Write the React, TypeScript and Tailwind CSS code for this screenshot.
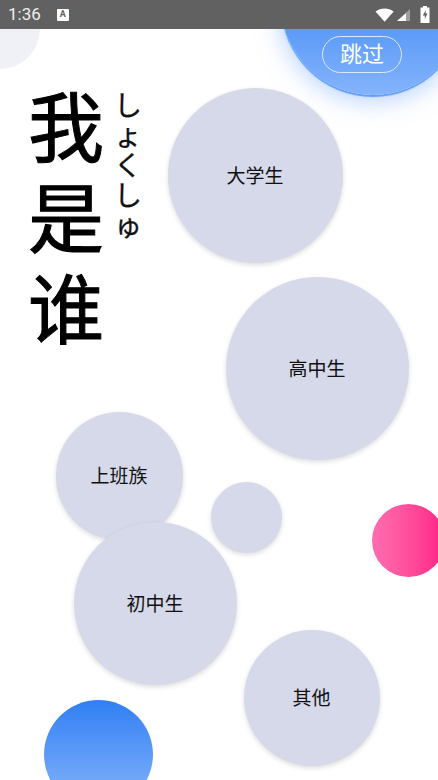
const cjk = "font-['Roboto','Noto_Sans_CJK_SC',sans-serif]";

function StatusBar() {
  return (
    <div className="flex h-[29px] shrink-0 items-center justify-between bg-[#616161] px-[8px] text-white">
      <div className="flex items-center">
        <span className="font-['Roboto',sans-serif] text-[17px] leading-none text-[#eeeeee]">1:36</span>
        <div className="ml-[16px] flex h-[12px] w-[12px] items-center justify-center rounded-[1px] bg-white">
          <span className="font-['Roboto',sans-serif] text-[9px] font-bold leading-none text-[#616161]">A</span>
        </div>
      </div>
      <div className="flex items-center">
        <svg width="20" height="14" viewBox="0 0 20 14">
          <path d="M0.5 3.6C3 1.5 6.300 0.5 9.600 0.500s6.600 1 9.100 3.100L9.600 13.800z" fill="#fff" />
        </svg>
        <svg className="ml-[1px]" width="15" height="14" viewBox="0 0 15 14">
          <path d="M14 1v12H1z" fill="#9e9e9e" />
          <path d="M10 5.200V13H1z" fill="#fff" />
        </svg>
        <svg className="ml-[9px]" width="10" height="17" viewBox="0 0 10 17">
          <path d="M3 0h4v1.500h2.500V17H0.500V1.500H3z" fill="#fff" />
          <path d="M5.800 4 2.800 9.500h2v3.500l2.800-5.500h-2z" fill="#616161" />
        </svg>
      </div>
    </div>
  );
}

function Bubble({ label, className }: { label?: string; className: string }) {
  return (
    <div className={`absolute flex items-center justify-center rounded-full bg-[#d5d9ea] pt-[3px] pr-[1px] shadow-[0_2px_5px_rgba(0,0,0,0.14)] ${cjk} text-[19px] text-[#111] ${className}`}>
      {label}
    </div>
  );
}

export default function App() {
  return (
    <div className="flex h-[780px] w-[438px] flex-col overflow-hidden bg-white">
      <StatusBar />
      <div className="relative flex-1 overflow-hidden">
        <div className="absolute left-[-40px] top-[-40px] h-[80px] w-[80px] rounded-full bg-[#eff1f7]" />

        {/* top right blob */}
        <div className="absolute left-[281px] top-[-118px] h-[184px] w-[184px] rounded-full bg-gradient-to-b from-[#5a9af8] from-[63%] to-[#84b3fb] shadow-[0_2px_1px_#5e9ef8,0_4px_26px_rgba(90,150,250,0.5)]" />
        <div className={`absolute left-[322px] top-[7px] flex h-[37px] w-[80px] items-center justify-center rounded-full border border-[#dbe8fd] text-[22px] text-white ${cjk}`}>
          跳过
        </div>

        {/* title */}
        <div className="relative flex items-start pl-[28px] pt-[63px]">
          <div className={`flex flex-col gap-[15px] text-[76px] leading-[76px] text-black [-webkit-text-stroke:1px_black] ${cjk}`}>
            <span>我</span>
            <span>是</span>
            <span>谁</span>
          </div>
          <div className="ml-[10px] mt-[-3px] w-[28px] text-[28px] leading-[30px] text-[#111] [-webkit-text-stroke:0.3px_#111] [line-break:anywhere] font-['Noto_Sans_CJK_JP',sans-serif]">
            しょくしゅ
          </div>
        </div>

        <Bubble label="大学生" className="left-[168px] top-[59px] h-[175px] w-[175px]" />
        <Bubble label="高中生" className="left-[226px] top-[248px] h-[183px] w-[183px]" />
        <Bubble label="上班族" className="left-[56px] top-[383px] h-[128px] w-[127px]" />
        <Bubble className="left-[211px] top-[453px] h-[71px] w-[71px]" />
        <Bubble label="初中生" className="left-[74px] top-[493px] h-[163px] w-[163px]" />
        <Bubble label="其他" className="left-[244px] top-[601px] h-[136px] w-[136px]" />

        <div className="absolute left-[372px] top-[475px] h-[73px] w-[73px] rounded-full bg-gradient-to-r from-[#ff6db0] to-[#ff1a86]" />
        <div className="absolute left-[44px] top-[671px] h-[109px] w-[109px] rounded-full bg-gradient-to-b from-[#2f7ff3] to-[#86b5fb]" />
      </div>
    </div>
  );
}
